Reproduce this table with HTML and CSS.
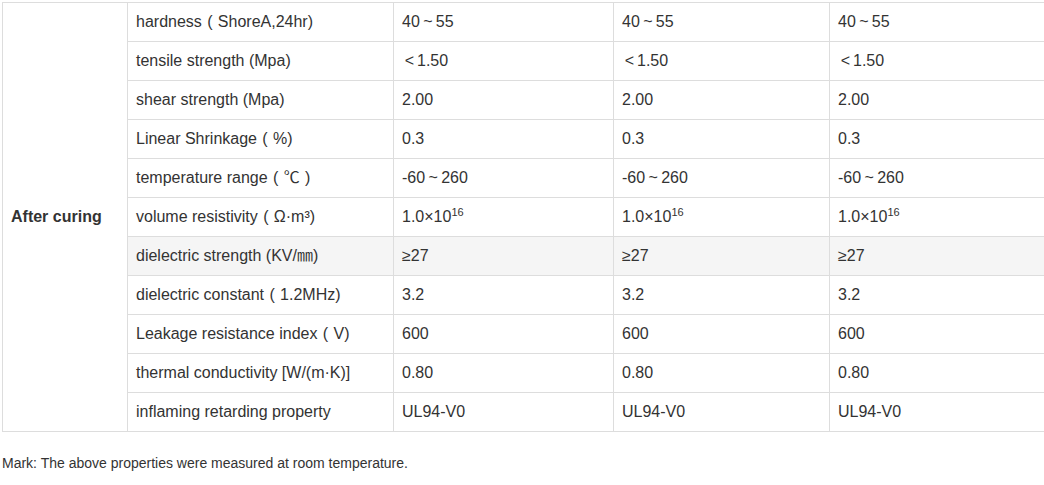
FILE: index.html
```html
<!DOCTYPE html>
<html>
<head>
<meta charset="utf-8">
<link rel="stylesheet" href="styles.css">
</head>
<body>
<div class="page">
<table class="spec">
  <colgroup>
    <col class="c1"><col class="c2"><col class="c3"><col class="c4"><col class="c5">
  </colgroup>
  <tbody>
    <tr>
      <th rowspan="11" class="group">After curing</th>
      <td>hardness<span class="fw">(</span>ShoreA,24hr)</td>
      <td>40<span class="fw">~</span>55</td><td>40<span class="fw">~</span>55</td><td>40<span class="fw">~</span>55</td>
    </tr>
    <tr><td>tensile strength (Mpa)</td>
      <td><span class="lt">&lt;</span>1.50</td><td><span class="lt">&lt;</span>1.50</td><td><span class="lt">&lt;</span>1.50</td></tr>
    <tr><td>shear strength (Mpa)</td><td>2.00</td><td>2.00</td><td>2.00</td></tr>
    <tr><td>Linear Shrinkage<span class="fw">(</span>%)</td><td>0.3</td><td>0.3</td><td>0.3</td></tr>
    <tr><td>temperature range<span class="fw">(</span>℃<span class="fw">)</span></td>
      <td>-60<span class="fw">~</span>260</td><td>-60<span class="fw">~</span>260</td><td>-60<span class="fw">~</span>260</td></tr>
    <tr><td>volume resistivity<span class="fw">(</span>Ω·m³)</td><td>1.0×10<sup>16</sup></td><td>1.0×10<sup>16</sup></td><td>1.0×10<sup>16</sup></td></tr>
    <tr class="hl"><td>dielectric strength (KV/㎜)</td><td>≥27</td><td>≥27</td><td>≥27</td></tr>
    <tr><td>dielectric constant<span class="fw">(</span>1.2MHz)</td><td>3.2</td><td>3.2</td><td>3.2</td></tr>
    <tr><td>Leakage resistance index<span class="fw">(</span>V)</td><td>600</td><td>600</td><td>600</td></tr>
    <tr><td>thermal conductivity [W/(m·K)]</td><td>0.80</td><td>0.80</td><td>0.80</td></tr>
    <tr><td>inflaming retarding property</td><td>UL94-V0</td><td>UL94-V0</td><td>UL94-V0</td></tr>
  </tbody>
</table>
<p class="mark">Mark: The above properties were measured at room temperature.</p>
</div>
</body>
</html>
```
FILE: styles.css
```css
html, body {
  margin: 0;
  padding: 0;
  background: #fff;
  overflow: hidden;
}
.page {
  padding: 2px 0 0 2px;
  font-family: "Liberation Sans", Arial, "Noto Sans CJK SC", sans-serif;
  color: #333;
}
.spec {
  border-collapse: collapse;
  table-layout: fixed;
  width: 1070px;
  font-size: 16px;
}
.c1 { width: 125px; }
.c2 { width: 266px; }
.c3 { width: 220px; }
.c4 { width: 216px; }
.c5 { width: 243px; }
.spec td, .spec th {
  border: 1px solid #ddd;
  padding: 8px 8px;
  line-height: 22px;
  height: 22px;
  text-align: left;
  vertical-align: middle;
  white-space: nowrap;
}
.spec th.group {
  font-weight: bold;
  padding-left: 8px;
}
.spec tr.hl td {
  background: #f5f5f5;
}
.fw {
  display: inline-block;
  width: 16px;
  text-align: center;
}
.lt {
  display: inline-block;
  width: 15px;
  text-align: center;
}
.spec sup {
  font-size: 11px;
  line-height: 0;
  vertical-align: 6px;
}
.mark {
  margin: 21px 0 0 0;
  font-size: 14px;
  line-height: 20px;
}
```
